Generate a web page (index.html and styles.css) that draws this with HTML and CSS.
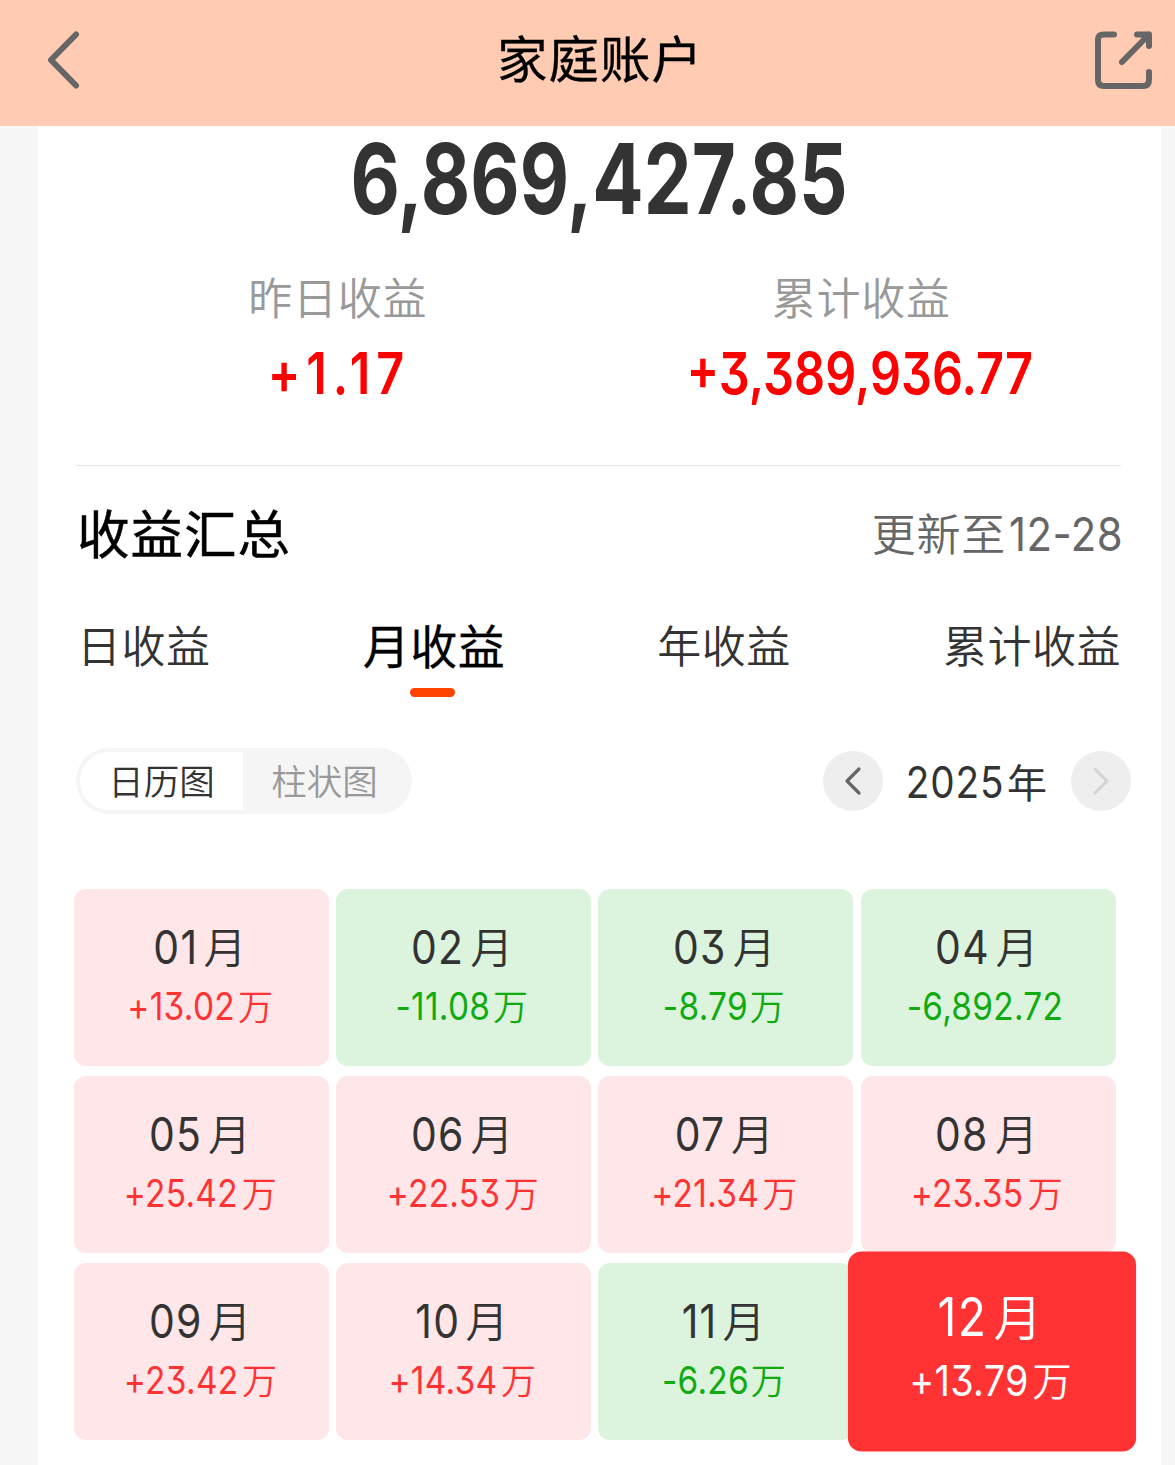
FILE: index.html
```html
<!DOCTYPE html>
<html lang="zh-CN">
<head>
<meta charset="utf-8">
<title>家庭账户</title>
<link rel="stylesheet" href="styles.css">
</head>
<body>
<header class="topbar">
  <svg class="back" width="36" height="62" viewBox="0 0 36 62" fill="none" stroke="#666" stroke-width="6" stroke-linecap="round" stroke-linejoin="round"><path d="M31 5.500 6 31 31 56.500"/></svg>
  <h1 class="title">家庭账户</h1>
  <svg class="share" width="60" height="60" viewBox="0 0 60 60" fill="none" stroke="#666" stroke-width="6" stroke-linecap="round" stroke-linejoin="round"><path d="M19 4.500H9q-6 0-6 5V50q0 6 6 6H48q6 0 6-6V42M42 4.500H54V16M54 4.500 27 32"/><path fill="#666" stroke="none" d="M44 3H55.500V16L50 9Z"/></svg>
</header>
<main class="card">
  <div class="total"><span class="fit">6,869,427.85</span></div>
  <div class="stats">
    <div class="stat"><div class="label">昨日收益</div><div class="value"><span class="fit short">+1.17</span></div></div>
    <div class="stat"><div class="label">累计收益</div><div class="value"><span class="fit">+3,389,936.77</span></div></div>
  </div>
  <section class="summary">
    <div class="summary-head">
      <h2>收益汇总</h2>
      <span class="updated">更新至<span class="num">12-28</span></span>
    </div>
    <nav class="tabs">
      <span class="tab">日收益</span>
      <span class="tab active">月收益</span>
      <span class="tab">年收益</span>
      <span class="tab">累计收益</span>
    </nav>
    <div class="controls">
      <div class="segment"><span class="seg on">日历图</span><span class="seg">柱状图</span></div>
      <div class="year">
        <span class="round"><svg width="20" height="30" viewBox="0 0 20 30" fill="none" stroke="#666" stroke-width="3.200" stroke-linecap="round" stroke-linejoin="round"><path d="M16 3 4 15 16 27"/></svg></span>
        <span class="year-text"><span class="num">2025</span>年</span>
        <span class="round"><svg width="20" height="30" viewBox="0 0 20 30" fill="none" stroke="#d4d4d4" stroke-width="3" stroke-linecap="round" stroke-linejoin="round"><path d="M4 3 16 15 4 27"/></svg></span>
      </div>
    </div>
    <div class="months">
      <div class="month up"><div class="name"><span class="num">01</span>月</div><div class="amount"><span class="num">+13.02</span>万</div></div>
      <div class="month down"><div class="name"><span class="num">02</span>月</div><div class="amount"><span class="num">-11.08</span>万</div></div>
      <div class="month down"><div class="name"><span class="num">03</span>月</div><div class="amount"><span class="num">-8.79</span>万</div></div>
      <div class="month down"><div class="name"><span class="num">04</span>月</div><div class="amount"><span class="num">-6,892.72</span></div></div>
      <div class="month up"><div class="name"><span class="num">05</span>月</div><div class="amount"><span class="num">+25.42</span>万</div></div>
      <div class="month up"><div class="name"><span class="num">06</span>月</div><div class="amount"><span class="num">+22.53</span>万</div></div>
      <div class="month up"><div class="name"><span class="num">07</span>月</div><div class="amount"><span class="num">+21.34</span>万</div></div>
      <div class="month up"><div class="name"><span class="num">08</span>月</div><div class="amount"><span class="num">+23.35</span>万</div></div>
      <div class="month up"><div class="name"><span class="num">09</span>月</div><div class="amount"><span class="num">+23.42</span>万</div></div>
      <div class="month up"><div class="name"><span class="num">10</span>月</div><div class="amount"><span class="num">+14.34</span>万</div></div>
      <div class="month down"><div class="name"><span class="num">11</span>月</div><div class="amount"><span class="num">-6.26</span>万</div></div>
      <div class="month current"><div class="name"><span class="num">12</span>月</div><div class="amount"><span class="num">+13.79</span>万</div></div>
    </div>
  </section>
</main>
</body>
</html>
```
FILE: styles.css
```css
* { box-sizing: border-box; margin: 0; padding: 0; }
body {
  width: 1175px;
  height: 1465px;
  overflow: hidden;
  background: #f7f7f7;
  color: #333;
  font-family: Inter, "Noto Sans CJK SC", sans-serif;
  font-feature-settings: "cv09" 1;
}
svg { display: block; }
.topbar {
  display: flex;
  align-items: center;
  justify-content: space-between;
  height: 126px;
  padding: 0 20px 6px 45px;
  background: #ffccb3;
}
.title {
  color: #000;
  font-size: 50.500px;
  font-weight: 400;
  letter-spacing: 1px;
  line-height: 60px;
  -webkit-text-stroke: .3px #000;
  margin: 0 0 0 24px;
}
.card {
  width: 1123px;
  height: 1339px;
  margin-left: 38px;
  background: #fff;
}
.total {
  height: 142px;
  text-align: center;
  font-size: 97px;
  font-weight: 700;
  line-height: 106px;
}
.total .fit { display: inline-block; transform: scaleX(.784); }
.stats {
  display: grid;
  grid-template-columns: 1fr 1fr;
  height: 197px;
  padding: 0 38px;
  text-align: center;
}
.label { color: #999; font-size: 44px; letter-spacing: .7px; font-weight: 350; line-height: 60px; padding-top: 1px; }
.value { color: #f00; font-size: 58px; font-weight: 600; line-height: 88px; }
.value .fit { display: inline-block; transform: translateX(-2px) scaleX(.838); }
.value .short { letter-spacing: 7px; margin-right: -7px; }
.summary {
  margin-left: 38px;
  width: 1045px;
  border-top: 1px solid #e6e6e6;
}
.summary-head {
  display: flex;
  align-items: center;
  justify-content: space-between;
  height: 135px;
  padding: 0 0 3px 1px;
}
.summary h2 { color: #000; font-size: 52.500px; letter-spacing: 1px; font-weight: 400; -webkit-text-stroke: .5px #000; padding-bottom: 3px; }
.updated { color: #666; font-size: 44px; font-weight: 350; letter-spacing: .7px; }
.num { display: inline-block; font-weight: 400; }
.updated .num { font-size: 47px; letter-spacing: .5px; transform: scaleX(.89); margin: 0 -9px 0 -4px; }
.tabs { display: flex; justify-content: space-between; height: 147px; padding-left: 1px; }
.tab { font-size: 44px; font-weight: 350; line-height: 92px; letter-spacing: .5px; display: flex; flex-direction: column; align-items: center; }
.tab.active { color: #000; font-size: 47px; font-weight: 400; -webkit-text-stroke: .3px #000; }
.tab.active::after { content: ""; width: 45px; height: 9px; margin: -5px 2px 0 0; border-radius: 5px; background: #ff4400; }
.controls { display: flex; justify-content: space-between; height: 66px; margin-right: -10px; }
.segment { display: flex; width: 336px; height: 66px; padding: 4px; border-radius: 33px; background: #f5f5f5; }
.seg { width: 163px; font-size: 35.500px; font-weight: 350; line-height: 61px; text-align: center; color: #999; }
.seg.on { height: 58px; color: #333; background: #fff; border-radius: 29px 0 0 29px; }
.year { display: flex; align-items: center; justify-content: space-between; width: 308px; }
.round { display: flex; align-items: center; justify-content: center; width: 60px; height: 60px; border-radius: 50%; background: #eee; }
.year-text { font-size: 40px; }
.year-text .num { font-size: 44px; letter-spacing: 1px; transform: scaleX(.88); margin: 0 -4px 0 -8px; }
.months {
  display: grid;
  grid-template-columns: repeat(4, 255px);
  grid-auto-rows: 177px;
  gap: 10px 7.200px;
  margin: 75px 0 0 -2px;
}
.month { padding: 30px 2px 0 0; border-radius: 12px; text-align: center; }
.name { font-size: 43px; font-weight: 350; line-height: 56px; }
.name .num { font-size: 47px; letter-spacing: 1.500px; transform: scaleX(.87); margin: 0 2px 0 -5px; }
.amount { font-size: 35px; font-weight: 350; line-height: 60px; }
.amount .num { font-size: 38px; letter-spacing: .3px; transform: scaleX(.88); margin: 0 -4px 0 -8px; }
.up { background: #ffe6e8; }
.down { background: #dcf4dd; }
.up .amount { color: #f33; }
.down .amount { color: #1a1; }
.current { position: relative; background: #f33; color: #fff; transform: translateX(3.500px) scale(1.130); }
.current .amount { margin-top: -3px; }
```
